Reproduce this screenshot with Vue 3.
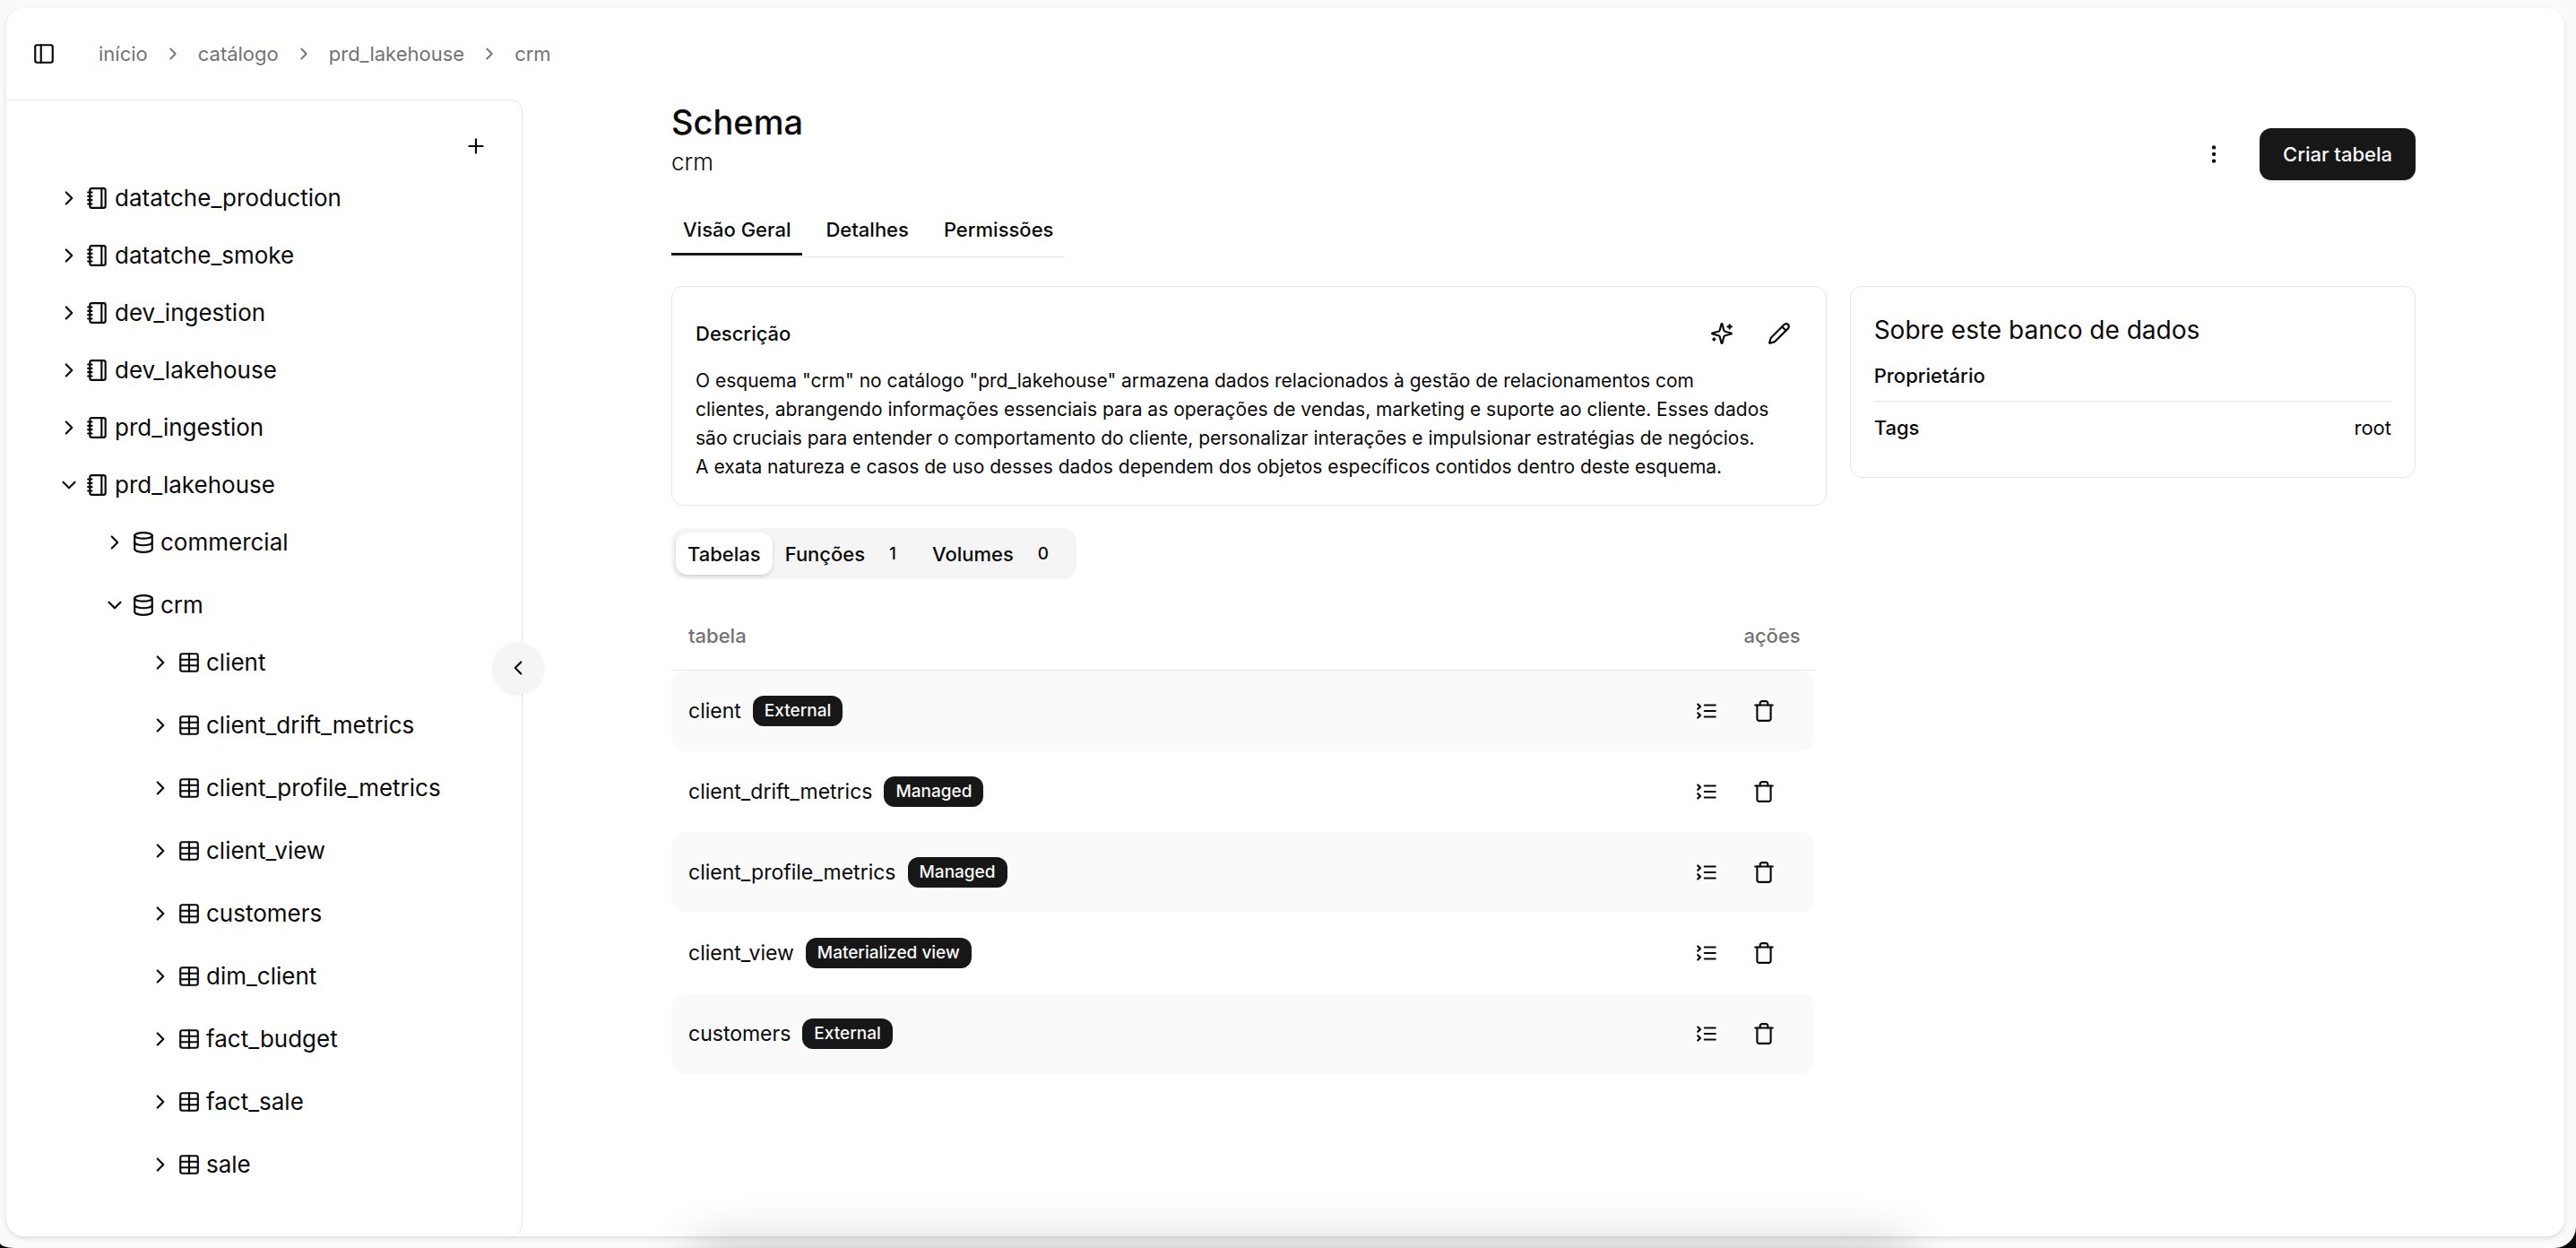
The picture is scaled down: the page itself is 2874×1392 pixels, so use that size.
<script setup>
import { ref, h } from 'vue';

// Icons (24x24 stroke set)
const icons = {
    panel: ['M5 3h14a2 2 0 0 1 2 2v14a2 2 0 0 1-2 2H5a2 2 0 0 1-2-2V5a2 2 0 0 1 2-2z', 'M9 3v18'],
    right: ['m9 18 6-6-6-6'],
    left: ['m15 18-6-6 6-6'],
    down: ['m6 9 6 6 6-6'],
    plus: ['M5 12h14', 'M12 5v14'],
    catalog: [
        'M2 6h4',
        'M2 10h4',
        'M2 14h4',
        'M2 18h4',
        'M6 2h12a2 2 0 0 1 2 2v16a2 2 0 0 1-2 2H6a2 2 0 0 1-2-2V4a2 2 0 0 1 2-2z',
        'M16 2v20',
    ],
    schema: ['M3 5a9 3 0 1 0 18 0a9 3 0 1 0-18 0', 'M3 5V19A9 3 0 0 0 21 19V5', 'M3 12A9 3 0 0 0 21 12'],
    table: [
        'M12 3v18',
        'M5 3h14a2 2 0 0 1 2 2v14a2 2 0 0 1-2 2H5a2 2 0 0 1-2-2V5a2 2 0 0 1 2-2z',
        'M3 9h18',
        'M3 15h18',
    ],
    dots: [
        'M11 12a1 1 0 1 0 2 0a1 1 0 1 0-2 0',
        'M11 5a1 1 0 1 0 2 0a1 1 0 1 0-2 0',
        'M11 19a1 1 0 1 0 2 0a1 1 0 1 0-2 0',
    ],
    sparkles: [
        'M9.937 15.5A2 2 0 0 0 8.5 14.063l-6.135-1.582a.5.5 0 0 1 0-.962L8.5 9.936A2 2 0 0 0 9.937 8.5l1.582-6.135a.5.5 0 0 1 .963 0L14.063 8.5A2 2 0 0 0 15.5 9.937l6.135 1.581a.5.5 0 0 1 0 .964L15.5 14.063a2 2 0 0 0-1.437 1.437l-1.582 6.135a.5.5 0 0 1-.963 0z',
        'M20 3v4',
        'M22 5h-4',
        'M4 17v2',
        'M5 18H3',
    ],
    pencil: [
        'M21.174 6.812a1 1 0 0 0-3.986-3.987L3.842 16.174a2 2 0 0 0-.5.83l-1.321 4.352a.5.5 0 0 0 .623.622l4.353-1.32a2 2 0 0 0 .83-.497z',
        'm15 5 4 4',
    ],
    list: ['m3 10 2.5-2.5L3 5', 'm3 19 2.5-2.5L3 14', 'M10 6h11', 'M10 12h11', 'M10 18h11'],
    trash: ['M3 6h18', 'M19 6v14c0 1-1 2-2 2H7c-1 0-2-1-2-2V6', 'M8 6V4c0-1 1-2 2-2h4c1 0 2 1 2 2v2'],
};

const Icon = (props) =>
    h(
        'svg',
        { class: 'icon', viewBox: '0 0 24 24', 'aria-hidden': 'true' },
        icons[props.name].map((d) => h('path', { d })),
    );
Icon.props = ['name'];

// Sidebar
const sidebarOpen = ref(true);

const tree = ref([
    { name: 'datatche_production' },
    { name: 'datatche_smoke' },
    { name: 'dev_ingestion' },
    { name: 'dev_lakehouse' },
    { name: 'prd_ingestion' },
    {
        name: 'prd_lakehouse',
        open: true,
        schemas: [
            { name: 'commercial' },
            {
                name: 'crm',
                open: true,
                tables: [
                    'client',
                    'client_drift_metrics',
                    'client_profile_metrics',
                    'client_view',
                    'customers',
                    'dim_client',
                    'fact_budget',
                    'fact_sale',
                    'sale',
                ],
            },
        ],
    },
]);

const breadcrumbs = ['início', 'catálogo', 'prd_lakehouse', 'crm'];

// Tabs
const tabs = ['Visão Geral', 'Detalhes', 'Permissões'];
const activeTab = ref('Visão Geral');

const sections = [
    { name: 'Tabelas' },
    { name: 'Funções', count: 1 },
    { name: 'Volumes', count: 0 },
];
const activeSection = ref('Tabelas');

const rows = [
    { name: 'client', type: 'External' },
    { name: 'client_drift_metrics', type: 'Managed' },
    { name: 'client_profile_metrics', type: 'Managed' },
    { name: 'client_view', type: 'Materialized view' },
    { name: 'customers', type: 'External' },
];
</script>

<template>
    <div class="window">
        <div class="panel">
            <!-- Top bar -->
            <header class="topbar">
                <button class="plain" aria-label="Menu"><Icon name="panel" /></button>
                <nav class="breadcrumbs">
                    <template v-for="(crumb, i) in breadcrumbs" :key="crumb">
                        <Icon v-if="i > 0" name="right" class="small" />
                        <a href="#">{{ crumb }}</a>
                    </template>
                </nav>
            </header>

            <div class="body">
                <!-- Catalog tree -->
                <aside class="sidebar">
                    <div v-show="sidebarOpen" class="sidebar-content">
                        <div class="sidebar-actions">
                            <button class="plain" aria-label="Adicionar"><Icon name="plus" /></button>
                        </div>
                        <ul class="tree">
                            <li v-for="catalog in tree" :key="catalog.name">
                                <button class="node" @click="catalog.open = !catalog.open">
                                    <Icon :name="catalog.open ? 'down' : 'right'" />
                                    <Icon name="catalog" />
                                    <span>{{ catalog.name }}</span>
                                </button>
                                <ul v-if="catalog.open && catalog.schemas" class="branch">
                                    <li v-for="schema in catalog.schemas" :key="schema.name">
                                        <button class="node" @click="schema.open = !schema.open">
                                            <Icon :name="schema.open ? 'down' : 'right'" />
                                            <Icon name="schema" />
                                            <span>{{ schema.name }}</span>
                                        </button>
                                        <ul v-if="schema.open && schema.tables" class="branch">
                                            <li v-for="table in schema.tables" :key="table">
                                                <button class="node">
                                                    <Icon name="right" />
                                                    <Icon name="table" />
                                                    <span>{{ table }}</span>
                                                </button>
                                            </li>
                                        </ul>
                                    </li>
                                </ul>
                            </li>
                        </ul>
                    </div>
                    <button class="collapse" aria-label="Recolher" @click="sidebarOpen = !sidebarOpen">
                        <Icon :name="sidebarOpen ? 'left' : 'right'" />
                    </button>
                </aside>

                <main class="main">
                    <div class="heading">
                        <div>
                            <h1>Schema</h1>
                            <p class="subtitle">crm</p>
                        </div>
                        <div class="heading-actions">
                            <button class="icon-button" aria-label="Mais opções"><Icon name="dots" /></button>
                            <button class="primary">Criar tabela</button>
                        </div>
                    </div>

                    <nav class="tabs">
                        <button
                            v-for="tab in tabs"
                            :key="tab"
                            class="tab"
                            :class="{ active: activeTab === tab }"
                            @click="activeTab = tab"
                        >
                            {{ tab }}
                        </button>
                    </nav>

                    <div class="columns">
                        <div class="details">
                            <section class="card">
                                <div class="card-header">
                                    <h2>Descrição</h2>
                                    <div class="actions">
                                        <button class="icon-button" aria-label="Gerar descrição"><Icon name="sparkles" /></button>
                                        <button class="icon-button" aria-label="Editar"><Icon name="pencil" /></button>
                                    </div>
                                </div>
                                <p class="description">
                                    O esquema "crm" no catálogo "prd_lakehouse" armazena dados relacionados à gestão de
                                    relacionamentos com<br />
                                    clientes, abrangendo informações essenciais para as operações de vendas, marketing e
                                    suporte ao cliente. Esses dados<br />
                                    são cruciais para entender o comportamento do cliente, personalizar interações e
                                    impulsionar estratégias de negócios.<br />
                                    A exata natureza e casos de uso desses dados dependem dos objetos específicos
                                    contidos dentro deste esquema.
                                </p>
                            </section>

                            <div class="segments">
                                <button
                                    v-for="section in sections"
                                    :key="section.name"
                                    class="segment"
                                    :class="{ active: activeSection === section.name }"
                                    @click="activeSection = section.name"
                                >
                                    {{ section.name }}
                                    <span v-if="section.count !== undefined" class="count">{{ section.count }}</span>
                                </button>
                            </div>

                            <div class="table-wrapper">
                                <table>
                                    <thead>
                                        <tr>
                                            <th>tabela</th>
                                            <th class="end">ações</th>
                                        </tr>
                                    </thead>
                                    <tbody>
                                        <tr v-for="row in rows" :key="row.name">
                                            <td>
                                                <div class="name">
                                                    <span>{{ row.name }}</span>
                                                    <span class="badge">{{ row.type }}</span>
                                                </div>
                                            </td>
                                            <td>
                                                <div class="actions row-actions">
                                                    <button class="icon-button" aria-label="Ver detalhes"><Icon name="list" /></button>
                                                    <button class="icon-button" aria-label="Excluir"><Icon name="trash" /></button>
                                                </div>
                                            </td>
                                        </tr>
                                    </tbody>
                                </table>
                            </div>
                        </div>

                        <section class="card about">
                            <h2>Sobre este banco de dados</h2>
                            <dl>
                                <div>
                                    <dt>Proprietário</dt>
                                    <dd></dd>
                                </div>
                                <div>
                                    <dt>Tags</dt>
                                    <dd>root</dd>
                                </div>
                            </dl>
                        </section>
                    </div>
                </main>
            </div>
        </div>
        <div class="bottom-shade"></div>
    </div>
</template>

<style>
html {
    background-color: #0a0a0a;
}

body {
    margin: 0;
}
</style>

<style scoped>
.window {
    box-sizing: border-box;
    display: flex;
    min-height: 100vh;
    padding: 9px 13px 13px 7px;
    background-color: #fafafa;
    border-radius: 0 0 24px 16px / 0 0 24px 6px;
    color: #0a0a0a;
    font-family: Inter, 'Noto Sans', sans-serif;
    font-size: 22px;
    line-height: 32px;
}

.window * {
    box-sizing: border-box;
}

h1,
h2,
p,
ul,
dl,
dd {
    margin: 0;
    padding: 0;
}

ul {
    list-style: none;
}

button {
    display: flex;
    align-items: center;
    padding: 0;
    border: 0;
    background: none;
    color: inherit;
    font: inherit;
    cursor: pointer;
}

a {
    color: inherit;
    text-decoration: none;
}

.icon {
    flex: none;
    width: 26px;
    height: 26px;
    fill: none;
    stroke: currentColor;
    stroke-width: 2;
    stroke-linecap: round;
    stroke-linejoin: round;
}

.icon.small {
    width: 22px;
    height: 22px;
}

.panel {
    flex: 1;
    display: flex;
    flex-direction: column;
    min-width: 0;
    background-color: #fff;
    border-radius: 20px;
    box-shadow: 0 2px 5px rgba(0, 0, 0, 0.12);
}

/* Top bar */
.topbar {
    display: flex;
    align-items: center;
    gap: 48px;
    height: 102px;
    padding-left: 29px;
}

.breadcrumbs {
    display: flex;
    align-items: center;
    gap: 17px;
    color: #737373;
}

.body {
    flex: 1;
    display: flex;
}

/* Sidebar */
.sidebar {
    position: relative;
    flex: none;
    border-top: 1px solid #e5e5e5;
    border-right: 1px solid #e5e5e5;
    border-radius: 0 13px 13px 0;
}

.sidebar-content {
    width: 575px;
    padding: 38px 38px 0 57px;
}

.sidebar-actions {
    display: flex;
    align-items: flex-start;
    justify-content: flex-end;
    height: 39px;
}

.tree {
    font-size: 26px;
}

.node {
    gap: 6px;
    width: 100%;
    height: 64px;
}

.branch {
    display: flex;
    flex-direction: column;
    gap: 6px;
    padding-left: 51px;
}

.collapse {
    position: absolute;
    top: 604px;
    right: -25px;
    justify-content: center;
    width: 58px;
    height: 58px;
    border-radius: 50%;
    background-color: #f5f5f5;
    box-shadow: 0 2px 3px rgba(0, 0, 0, 0.05);
}

/* Main */
.main {
    flex: 1;
    min-width: 0;
    padding: 0 166px;
}

.heading {
    display: flex;
    align-items: flex-end;
    justify-content: space-between;
}

h1 {
    font-size: 38px;
    font-weight: 500;
    line-height: 50px;
}

.subtitle {
    font-size: 26px;
    font-weight: 300;
    line-height: 40px;
}

.heading-actions {
    display: flex;
    align-items: center;
    gap: 26px;
}

.primary {
    height: 58px;
    padding: 0 26px;
    border-radius: 13px;
    background-color: #171717;
    color: #fafafa;
    font-weight: 500;
    box-shadow: 0 2px 3px rgba(0, 0, 0, 0.1);
}

.icon-button {
    justify-content: center;
    width: 51px;
    height: 51px;
}

.tabs {
    display: flex;
    gap: 13px;
    width: fit-content;
    margin: 26px 0 32px;
    padding-bottom: 1px;
    border-bottom: 1px solid #e5e5e5;
}

.tab {
    padding: 13px 13px 10px;
    border-bottom: 3px solid transparent;
    font-weight: 500;
}

.tab.active {
    border-color: #171717;
}

.columns {
    display: grid;
    grid-template-columns: repeat(3, 1fr);
    gap: 26px;
    align-items: start;
}

.details {
    grid-column: span 2;
}

.card {
    padding: 26px;
    border: 1px solid #e5e5e5;
    border-radius: 13px;
}

.card-header {
    display: flex;
    align-items: center;
    justify-content: space-between;
    margin-bottom: 12px;
}

.card-header h2 {
    font-size: 22px;
    font-weight: 500;
}

.description {
    font-size: 21px;
}

.actions {
    display: flex;
    gap: 13px;
}

/* Sections */
.segments {
    display: flex;
    gap: 1px;
    width: fit-content;
    margin: 25px 0;
    padding: 5px;
    border-radius: 16px;
    background-color: #f5f5f5;
}

.segment {
    gap: 14px;
    height: 47px;
    padding: 0 13px;
    border-radius: 13px;
    font-weight: 500;
}

.segment.active {
    background-color: #fff;
    box-shadow: 0 2px 4px rgba(0, 0, 0, 0.15);
}

.count {
    padding: 0 13px;
    font-size: 19px;
}

/* Table */
.table-wrapper {
    padding-right: 13px;
}

table {
    width: 100%;
    border-collapse: separate;
    border-spacing: 0;
}

th {
    height: 77px;
    padding: 0 16px 0 19px;
    border-bottom: 1px solid #e5e5e5;
    color: #737373;
    font-weight: 500;
    text-align: left;
}

th.end {
    text-align: right;
}

td {
    height: 90px;
    padding: 0 31px 0 19px;
    font-size: 23px;
}

tbody tr:nth-child(odd) td {
    background-color: #fafafa;
}

td:first-child {
    border-radius: 16px 0 0 16px;
}

td:last-child {
    border-radius: 0 16px 16px 0;
}

.name {
    display: flex;
    align-items: center;
    gap: 13px;
}

.badge {
    padding: 1px 13px;
    border-radius: 12px;
    background-color: #171717;
    color: #fafafa;
    font-size: 19px;
    font-weight: 500;
}

.row-actions {
    justify-content: flex-end;
}

/* About */
.about h2 {
    font-size: 28px;
    font-weight: 400;
    line-height: 44px;
}

.about dl > div {
    display: flex;
    justify-content: space-between;
    padding: 13px 0 12px;
    border-bottom: 1px solid #e5e5e5;
}

.about dl > div:last-child {
    border-bottom-color: transparent;
}

dt {
    font-weight: 500;
}

/* Soft shade that rises from below the window */
.bottom-shade {
    position: fixed;
    top: 100%;
    left: 27%;
    width: 47%;
    height: 100px;
    box-shadow: 0 0 60px rgba(0, 0, 0, 0.24);
    pointer-events: none;
}
</style>
